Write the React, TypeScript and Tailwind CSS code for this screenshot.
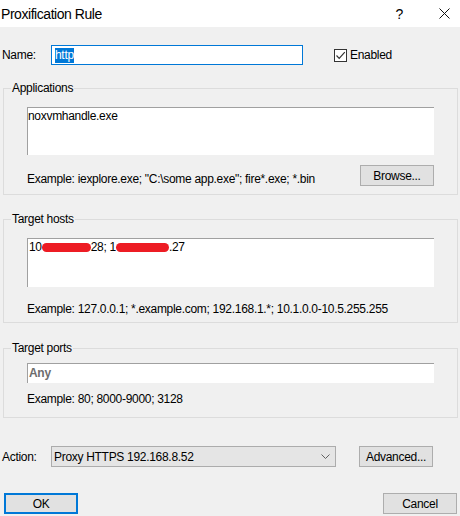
import React from "react";

function GroupBox({ label, className, children }: { label: string; className: string; children: React.ReactNode }) {
  return (
    <div className={"relative border border-[#dcdcdc] " + className}>
      <span className="absolute left-[7px] -top-[9px] px-[1px] bg-[#f0f0f0] leading-[16px]">{label}</span>
      {children}
    </div>
  );
}

function Button({ children, className = "" }: { children: React.ReactNode; className?: string }) {
  return (
    <div className={"w-[74px] h-[21px] bg-[#e1e1e1] flex items-center justify-center leading-[16px] " + (className || "border border-[#adadad]")}>
      {children}
    </div>
  );
}

function Redact({ w }: { w: number }) {
  return <span className="inline-block h-[9px] rounded-full bg-[#ed1c24] align-[-1px]" style={{ width: w }} />;
}

export default function App() {
  return (
    <div className="w-[460px] h-[516px] bg-[#f0f0f0] text-black text-[12px] leading-[16px] tracking-[-0.3px] flex flex-col font-['Liberation_Sans',Arial,sans-serif] overflow-hidden">
      {/* Title bar */}
      <div className="h-[27px] bg-white flex items-center shrink-0">
        <span className="text-[14px] tracking-[-0.45px] pl-[1px] leading-[18px] text-[#000]">Proxification Rule</span>
        <div className="flex-1" />
        <span className="text-[14px] leading-[18px] mr-[36px]">?</span>
        <svg width="11" height="11" viewBox="0 0 11 11" className="mr-[10px]">
          <path d="M0.5 0.5 L10.5 10.5 M10.5 0.5 L0.5 10.5" stroke="#111" strokeWidth="1" />
        </svg>
      </div>

      {/* Name row */}
      <div className="mt-[18px] h-[20px] flex items-center">
        <span className="ml-[2px] w-[49px]">Name:</span>
        <div className="w-[252px] h-[20px] bg-white border border-[#0078d7] flex items-center pl-[3px]">
          <span className="bg-[#0078d7] text-white leading-[15px]">http</span>
        </div>
        <div className="ml-[31px] w-[13px] h-[13px] border border-[#333] bg-white flex items-center justify-center">
          <svg width="11" height="11" viewBox="0 0 11 11">
            <path d="M1.5 5.5 L4.2 8.3 L9.8 2.2" fill="none" stroke="#333" strokeWidth="1.2" />
          </svg>
        </div>
        <span className="ml-[3px]">Enabled</span>
      </div>

      <div className="ml-[3px] mr-[2px] flex flex-col">
        {/* Applications */}
        <GroupBox label="Applications" className="mt-[23px] pt-[18px] px-[23px] pb-[8px]">
          <div className="h-[48px] bg-white border-t border-l border-[#a0a0a0]">noxvmhandle.exe</div>
          <div className="mt-[10px] h-[21px] flex justify-between items-start">
            <span className="mt-[6px]">Example: iexplore.exe; "C:\some app.exe"; fire*.exe; *.bin</span>
            <Button>Browse...</Button>
          </div>
        </GroupBox>

        {/* Target hosts */}
        <GroupBox label="Target hosts" className="mt-[24px] pt-[18px] px-[23px] pb-[5px]">
          <div className="h-[49px] bg-white border-t border-l border-[#a0a0a0] pl-[1px] whitespace-nowrap">
            10<Redact w={49} />28; 1<Redact w={53} />.27
          </div>
          <div className="mt-[14px]">Example: 127.0.0.1; *.example.com; 192.168.1.*; 10.1.0.0-10.5.255.255</div>
        </GroupBox>

        {/* Target ports */}
        <GroupBox label="Target ports" className="mt-[25px] pt-[14px] px-[23px] pb-[10px]">
          <div className="h-[20px] bg-white border-t border-l border-[#a0a0a0] pl-[1px] font-bold text-[#6d6d6d] leading-[18px]">Any</div>
          <div className="mt-[8px]">Example: 80; 8000-9000; 3128</div>
        </GroupBox>
      </div>

      {/* Action row */}
      <div className="mt-[28px] h-[21px] flex items-center">
        <span className="ml-[2px] w-[49px]">Action:</span>
        <div className="w-[285px] h-[21px] bg-[#e5e5e5] border border-[#acacac] flex items-center pl-[2px] pr-[5px]">
          <span className="flex-1">Proxy HTTPS 192.168.8.52</span>
          <svg width="9" height="5" viewBox="0 0 9 5">
            <path d="M0.5 0.5 L4.5 4.5 L8.5 0.5" fill="none" stroke="#606060" strokeWidth="1" />
          </svg>
        </div>
        <Button className="ml-[23px] border border-[#adadad]">Advanced...</Button>
      </div>

      {/* Bottom buttons */}
      <div className="mt-[26px] flex justify-between pl-[4px] pr-[3px]">
        <Button className="border-2 border-[#0078d7]">OK</Button>
        <Button>Cancel</Button>
      </div>
    </div>
  );
}
